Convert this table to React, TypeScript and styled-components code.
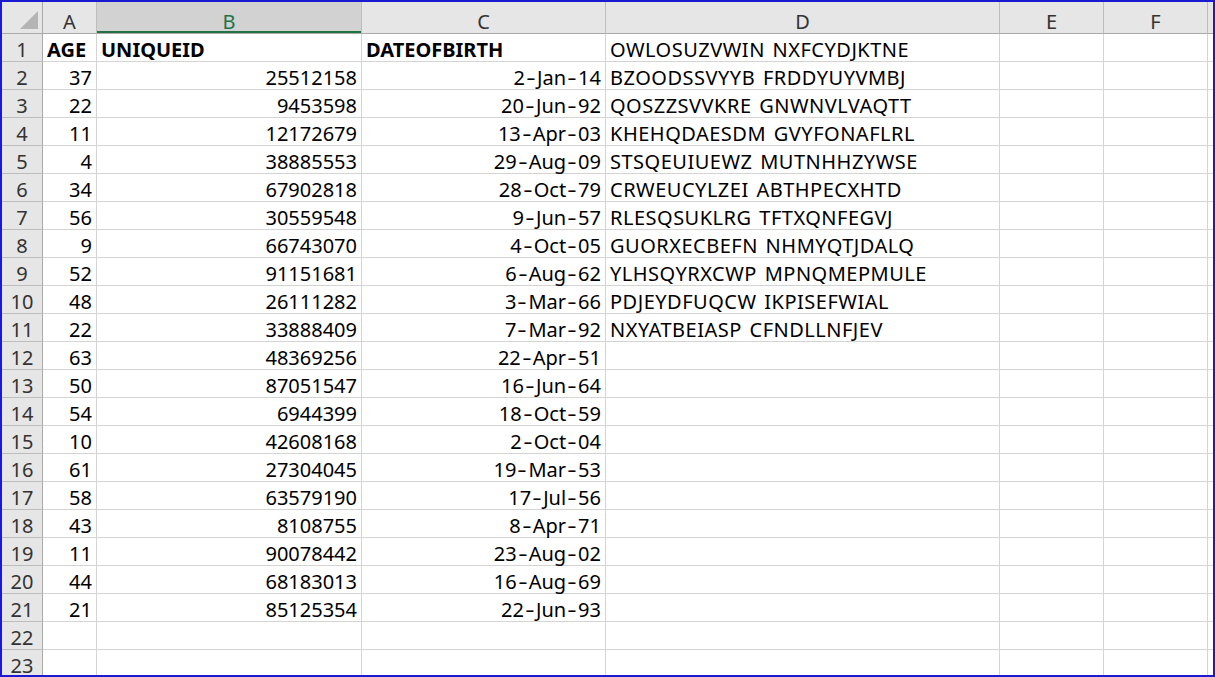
import React from "react";
import styled, { createGlobalStyle, css } from "styled-components";

const Global = createGlobalStyle`
  html, body { margin: 0; padding: 0; background: #fff; }
  * { box-sizing: border-box; }
`;

const FONT = `"Noto Sans", "Noto Sans CJK SC", sans-serif`;

const Frame = styled.div`
  width: 1215px;
  height: 677px;
  border: 2px solid #1a1ad0;
  overflow: hidden;
  background: #fff;
  font-family: ${FONT};
`;

const Sheet = styled.div`
  display: grid;
  grid-template-columns: 41px 54px 265px 244px 394px 104px 104px 1fr;
  grid-template-rows: 32px;
  grid-auto-rows: 28px;
`;

const Corner = styled.div`
  position: relative;
  background: #e6e6e6;
  border-right: 1px solid #a9a9a9;
  border-bottom: 1px solid #a9a9a9;
  &::after {
    content: "";
    position: absolute;
    right: 4px;
    bottom: 4px;
    width: 0;
    height: 0;
    border-left: 18px solid transparent;
    border-bottom: 18px solid #b4b4b4;
  }
`;

const ColHead = styled.div<{ $selected?: boolean }>`
  background: ${(p) => (p.$selected ? "#d2d2d2" : "#e6e6e6")};
  border-right: 1px solid #bdbdbd;
  border-bottom: 1px solid #a9a9a9;
  color: ${(p) => (p.$selected ? "#217346" : "#333")};
  font-size: 20px;
  display: flex;
  align-items: center;
  justify-content: center;
  padding-top: 7px;
  ${(p) =>
    p.$selected &&
    css`
      box-shadow: inset 0 -2px 0 #217346;
    `}
`;

const RowHead = styled.div`
  background: #e6e6e6;
  border-right: 1px solid #a9a9a9;
  border-bottom: 1px solid #bdbdbd;
  color: #333;
  font-size: 20px;
  display: flex;
  align-items: flex-end;
  justify-content: center;
  line-height: 1;
  padding-bottom: 1px;
`;

const Cell = styled.div<{ $align?: "left" | "right"; $bold?: boolean; $wide?: boolean }>`
  border-right: 1px solid #d4d4d4;
  border-bottom: 1px solid #d4d4d4;
  color: #000;
  font-size: 20px;
  font-weight: ${(p) => (p.$bold ? 700 : 400)};
  display: flex;
  align-items: flex-end;
  justify-content: ${(p) => (p.$align === "right" ? "flex-end" : "flex-start")};
  white-space: nowrap;
  overflow: visible;
  line-height: 1;
  padding: 0 4px 1px 4px;
  ${(p) =>
    p.$wide &&
    css`
      letter-spacing: 0.5px;
      word-spacing: 2px;
    `}
`;

const Dash = styled.span`
  display: inline-block;
  width: 12px;
  text-align: center;
  transform: scaleX(1.45);
`;

const Filler = styled.div`
  border-bottom: 1px solid #d4d4d4;
`;

const HeadFiller = styled.div`
  background: #e6e6e6;
  border-bottom: 1px solid #a9a9a9;
`;

type Row = [number, number, string, string];

const data: Row[] = [
  [37, 25512158, "2-Jan-14", "BZOODSSVYYB FRDDYUYVMBJ"],
  [22, 9453598, "20-Jun-92", "QOSZZSVVKRE GNWNVLVAQTT"],
  [11, 12172679, "13-Apr-03", "KHEHQDAESDM GVYFONAFLRL"],
  [4, 38885553, "29-Aug-09", "STSQEUIUEWZ MUTNHHZYWSE"],
  [34, 67902818, "28-Oct-79", "CRWEUCYLZEI ABTHPECXHTD"],
  [56, 30559548, "9-Jun-57", "RLESQSUKLRG TFTXQNFEGVJ"],
  [9, 66743070, "4-Oct-05", "GUORXECBEFN NHMYQTJDALQ"],
  [52, 91151681, "6-Aug-62", "YLHSQYRXCWP MPNQMEPMULE"],
  [48, 26111282, "3-Mar-66", "PDJEYDFUQCW IKPISEFWIAL"],
  [22, 33888409, "7-Mar-92", "NXYATBEIASP CFNDLLNFJEV"],
  [63, 48369256, "22-Apr-51", ""],
  [50, 87051547, "16-Jun-64", ""],
  [54, 6944399, "18-Oct-59", ""],
  [10, 42608168, "2-Oct-04", ""],
  [61, 27304045, "19-Mar-53", ""],
  [58, 63579190, "17-Jul-56", ""],
  [43, 8108755, "8-Apr-71", ""],
  [11, 90078442, "23-Aug-02", ""],
  [44, 68183013, "16-Aug-69", ""],
  [21, 85125354, "22-Jun-93", ""],
];

const cols = ["A", "B", "C", "D", "E", "F"];

function DateText({ value }: { value: string }) {
  const parts = value.split("-");
  return (
    <span>
      {parts.map((p, i) => (
        <React.Fragment key={i}>
          {i > 0 && <Dash>-</Dash>}
          {p}
        </React.Fragment>
      ))}
    </span>
  );
}

export default function App() {
  return (
    <>
      <Global />
      <Frame>
        <Sheet>
          <Corner />
          {cols.map((c) => (
            <ColHead key={c} $selected={c === "B"}>
              {c}
            </ColHead>
          ))}
          <HeadFiller />

          <RowHead>1</RowHead>
          <Cell $bold>AGE</Cell>
          <Cell $bold>UNIQUEID</Cell>
          <Cell $bold>DATEOFBIRTH</Cell>
          <Cell $wide>OWLOSUZVWIN NXFCYDJKTNE</Cell>
          <Cell />
          <Cell />
          <Filler />

          {data.map((r, i) => (
            <React.Fragment key={i}>
              <RowHead>{i + 2}</RowHead>
              <Cell $align="right">{r[0]}</Cell>
              <Cell $align="right">{r[1]}</Cell>
              <Cell $align="right">
                <DateText value={r[2]} />
              </Cell>
              <Cell $wide>{r[3]}</Cell>
              <Cell />
              <Cell />
              <Filler />
            </React.Fragment>
          ))}

          {[22, 23].map((n) => (
            <React.Fragment key={n}>
              <RowHead>{n}</RowHead>
              <Cell />
              <Cell />
              <Cell />
              <Cell />
              <Cell />
              <Cell />
              <Filler />
            </React.Fragment>
          ))}
        </Sheet>
      </Frame>
    </>
  );
}
